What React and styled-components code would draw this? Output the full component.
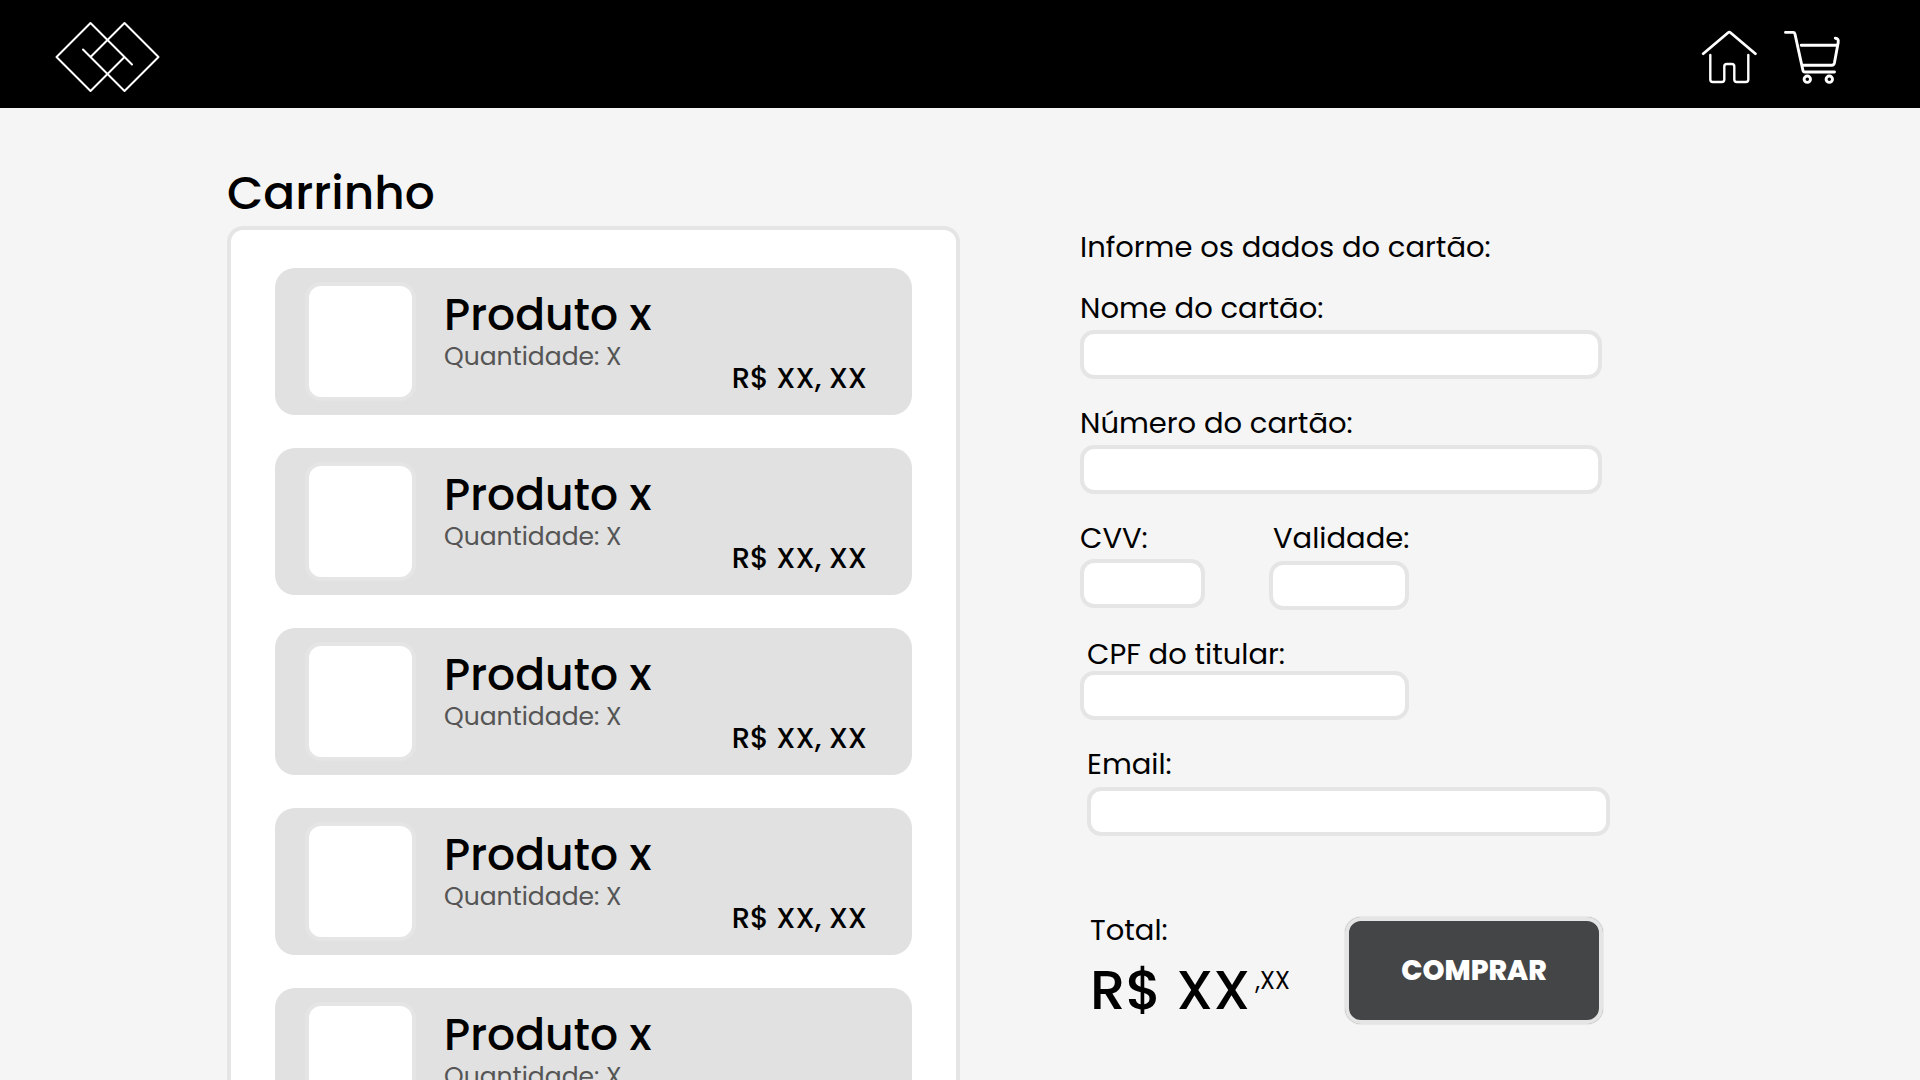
import React from "react";
import styled, { createGlobalStyle } from "styled-components";

const GlobalStyle = createGlobalStyle`
  *, *::before, *::after { box-sizing: border-box; }
  body {
    margin: 0;
    background: #f5f5f5;
    color: #000;
    font-family: Poppins, Inter, "Liberation Sans", sans-serif;
  }
`;

const Header = styled.header`
  display: flex;
  align-items: center;
  justify-content: space-between;
  height: 108px;
  padding: 6px 79px 0 54px;
  background: #000;
`;

const HeaderLink = styled.a`
  display: block;
  color: #fff;
`;

const Nav = styled.nav`
  display: flex;
  gap: 26px;
`;

const Icon = styled.svg`
  display: block;
  fill: none;
  stroke: currentColor;
  stroke-linecap: round;
  stroke-linejoin: round;
`;

const Main = styled.main`
  display: grid;
  grid-template-columns: minmax(0, 733fr) minmax(0, 530fr);
  column-gap: 120px;
  align-items: start;
  padding: 52px 310px 0 227px;
`;

const Title = styled.h1`
  margin: 0;
  font-size: 47px;
  font-weight: 500;
  line-height: 66px;
`;

const CartList = styled.ul`
  display: flex;
  flex-direction: column;
  gap: 33px;
  margin: 0;
  padding: 38px 44px;
  list-style: none;
  background: #fff;
  border: 4px solid #e5e5e5;
  border-radius: 16px;
`;

const CartItem = styled.li`
  display: flex;
  gap: 28px;
  height: 147px;
  padding: 0 45px 0 30px;
  background: #e1e1e1;
  border-radius: 20px;
`;

const Thumb = styled.div`
  flex: none;
  align-self: center;
  width: 111px;
  height: 119px;
  background: #fff;
  border: 4px solid #e5e5e5;
  border-radius: 16px;
`;

const ItemInfo = styled.div`
  flex: 1;
  padding-top: 22px;
`;

const ItemName = styled.h2`
  margin: 0;
  font-size: 44px;
  font-weight: 500;
  line-height: 50px;
  white-space: nowrap;
`;

const ItemQuantity = styled.p`
  margin: 0;
  color: #555;
  font-size: 25px;
  line-height: 34px;
  white-space: nowrap;
`;

const ItemPrice = styled.p`
  align-self: flex-end;
  margin: 0 0 20px;
  font-size: 29px;
  font-weight: 500;
  line-height: 34px;
  white-space: nowrap;
`;

const Form = styled.form`
  display: flex;
  flex-direction: column;
  gap: 27px;
  padding-top: 70px;
`;

const FormText = styled.p`
  margin: 0;
  font-size: 29px;
  line-height: 34px;
`;

const Field = styled.div`
  display: flex;
  flex-direction: column;
  gap: ${(p) => p.$gap}px;
  width: ${(p) => p.$width};
  margin-left: ${(p) => (p.$inset ? "7px" : "0")};
`;

const Label = styled.label`
  padding-left: ${(p) => p.$indent || 0}px;
  font-size: 29px;
  line-height: 34px;
  white-space: nowrap;
`;

const Input = styled.input`
  width: 100%;
  height: 49px;
  padding: 0 16px;
  font: inherit;
  font-size: 25px;
  background: #fff;
  border: 4px solid #e5e5e5;
  border-radius: 14px;
`;

const FieldRow = styled.div`
  display: flex;
  gap: 64px;
`;

const Checkout = styled.div`
  display: flex;
  justify-content: space-between;
  align-items: flex-end;
  margin-top: 50px;
  padding: 0 7px 0 10px;
`;

const Total = styled.div`
  display: flex;
  flex-direction: column;
  gap: 9px;
`;

const TotalValue = styled.p`
  display: flex;
  align-items: flex-start;
  gap: 5px;
  margin: 0;
  font-size: 56px;
  font-weight: 500;
  line-height: 68px;
  white-space: nowrap;
`;

const Cents = styled.span`
  padding-top: 12px;
  font-size: 24px;
  font-weight: 400;
  line-height: 26px;
`;

const BuyButton = styled.button`
  width: 258px;
  height: 107px;
  padding: 0;
  color: #fff;
  background: #444546;
  border: 4px solid #e5e5e5;
  border-radius: 16px;
  box-shadow: 0 0 1px 0 #777;
  font-family: inherit;
  font-size: 28px;
  font-weight: 800;
  cursor: pointer;
`;

const products = [1, 2, 3, 4, 5].map((id) => ({
  id,
  name: "Produto x",
  quantity: "X",
  price: "R$ XX, XX",
}));

function Logo() {
  return (
    <Icon width="108" height="72" viewBox="0 0 108 72" strokeWidth="2">
      <path d="M78 43.5 36.5 2 2.5 36l34 34 34-34" />
      <path d="M29 28.5 70.5 70l34-34-34-34-34 34" />
    </Icon>
  );
}

function HomeIcon() {
  return (
    <Icon width="56" height="56" viewBox="1701 29 56 56" strokeWidth="2.4">
      <path strokeWidth="2.8" d="M1703.2 53.7 1728 32.7Q1729.3 31.6 1730.6 32.7L1755.4 53.7" />
      <path d="M1710.3 55v24.5q0 2.5 2.5 2.5h9q2.5 0 2.5-2.5V66.5q0-2.5 2.5-2.5h5q2.5 0 2.5 2.5V79.5q0 2.5 2.5 2.5h9q2.5 0 2.5-2.5V55" />
    </Icon>
  );
}

function CartIcon() {
  return (
    <Icon width="58" height="56" viewBox="1783 29 58 56" strokeWidth="2.9">
      <path d="M1785.5 32.4h7.7q1.3 0 1.7 1.4l8 36.5q.4 1.7 2 1.7h29.6" />
      <path d="M1801.2 45.3h35.6M1835.3 38.2q3.6.3 2.9 4.3l-3.8 20.5q-.5 2.3-2.6 2.3h-29" />
      <circle cx="1807.3" cy="79.2" r="3.2" />
      <circle cx="1829.3" cy="79.2" r="3.2" />
    </Icon>
  );
}

function FormField({ id, label, gap, width, indent, inset, type = "text" }) {
  return (
    <Field $gap={gap} $width={width} $inset={inset}>
      <Label htmlFor={id} $indent={indent}>{label}</Label>
      <Input id={id} name={id} type={type} />
    </Field>
  );
}

export default function App() {
  return (
    <>
      <GlobalStyle />
      <Header>
        <HeaderLink href="#inicio" aria-label="Logo"><Logo /></HeaderLink>
        <Nav>
          <HeaderLink href="#inicio" aria-label="Início"><HomeIcon /></HeaderLink>
          <HeaderLink href="#carrinho" aria-label="Carrinho"><CartIcon /></HeaderLink>
        </Nav>
      </Header>
      <Main>
        <section>
          <Title>Carrinho</Title>
          <CartList>
            {products.map((product) => (
              <CartItem key={product.id}>
                <Thumb />
                <ItemInfo>
                  <ItemName>{product.name}</ItemName>
                  <ItemQuantity>Quantidade: {product.quantity}</ItemQuantity>
                </ItemInfo>
                <ItemPrice>{product.price}</ItemPrice>
              </CartItem>
            ))}
          </CartList>
        </section>
        <Form onSubmit={(event) => event.preventDefault()}>
          <FormText>Informe os dados do cartão:</FormText>
          <FormField id="nome" label="Nome do cartão:" gap={5} width="calc(100% - 8px)" />
          <FormField id="numero" label="Número do cartão:" gap={5} width="calc(100% - 8px)" />
          <FieldRow>
            <FormField id="cvv" label="CVV:" gap={4} width="125px" />
            <FormField id="validade" label="Validade:" gap={6} width="140px" indent={4} />
          </FieldRow>
          <FormField id="cpf" label="CPF do titular:" gap={0} width="329px" indent={7} />
          <FormField id="email" label="Email:" gap={6} width="calc(100% - 7px)" inset type="email" />
          <Checkout>
            <Total>
              <FormText>Total:</FormText>
              <TotalValue>
                R$ XX<Cents>,XX</Cents>
              </TotalValue>
            </Total>
            <BuyButton type="submit">COMPRAR</BuyButton>
          </Checkout>
        </Form>
      </Main>
    </>
  );
}
